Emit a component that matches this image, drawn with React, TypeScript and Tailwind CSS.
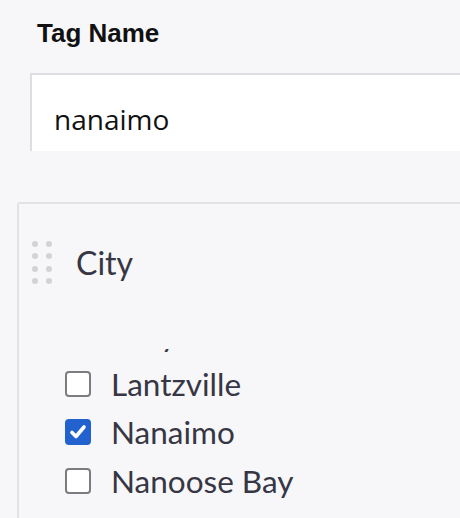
import React from 'react';

const cities = [
  { name: 'Ladysmith', checked: false },
  { name: 'Lantzville', checked: false },
  { name: 'Nanaimo', checked: true },
  { name: 'Nanoose Bay', checked: false },
];

const DragHandle = () => (
  <div className="grid grid-cols-2 gap-x-[8px] gap-y-[6.3px]">
    {Array.from({ length: 8 }).map((_, i) => (
      <span key={i} className="block w-[6px] h-[6px] rounded-full bg-[#d3d3d7]" />
    ))}
  </div>
);

const Checkbox = ({ checked }: { checked: boolean }) =>
  checked ? (
    <span className="flex items-center justify-center w-[26px] h-[26px] rounded-[4px] bg-[#2262cf]">
      <svg width="20" height="20" viewBox="0 0 20 20" fill="none">
        <path d="M4 10.5 L8 14.5 L16 5" stroke="white" strokeWidth="3.6" strokeLinecap="round" strokeLinejoin="round" />
      </svg>
    </span>
  ) : (
    <span className="block w-[26px] h-[26px] rounded-[4px] border-2 border-[#7c7c80] bg-white" />
  );

export default function App() {
  return (
    <div className="w-[460px] h-[518px] overflow-hidden bg-[#f7f7f9] pt-[18px]">
      <div className="pl-[37px] text-[26px] leading-[30px] font-bold text-[#111] font-['Liberation_Sans',Arial,sans-serif]">
        Tag Name
      </div>

      {/* input, clipped at the bottom */}
      <div className="ml-[30px] mt-[25px] w-[460px] h-[78px] bg-white border-2 border-b-0 border-[#dedee2] pl-[22px] pt-[25px]">
        <div className="text-[28px] leading-[38px] text-[#111] font-['Open_Sans',sans-serif]">nanaimo</div>
      </div>

      {/* facet panel */}
      <div className="ml-[17px] mt-[51px] w-[460px] h-[320px] border-2 border-r-0 border-b-0 border-[#e2e2e6] rounded-tl-[3px] font-['Lato',sans-serif] text-[#363644]">
        <div className="flex items-center h-[43px] pl-[13px] mt-[37px]">
          <DragHandle />
          <span className="ml-[24px] text-[32px] leading-[38px]">City</span>
        </div>

        {/* scrolled list, the row above is mostly hidden */}
        <div className="mt-[65px] h-[200px] overflow-hidden pl-[46px]">
          <div className="mt-[-38px] flex flex-col">
            {cities.map((c) => (
              <div key={c.name} className="flex items-center h-[48.5px] gap-[20px]">
                <Checkbox checked={c.checked} />
                <span className="text-[31.5px] leading-[36px]">{c.name}</span>
              </div>
            ))}
          </div>
        </div>
      </div>
    </div>
  );
}
